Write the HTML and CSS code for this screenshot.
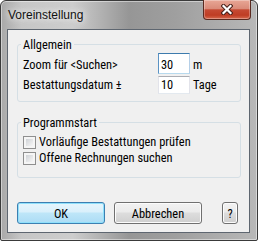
FILE: index.html
```html
<!DOCTYPE html>
<html>
<head>
    <title>Voreinstellung</title>
    <meta charset="utf-8">
    <link rel="stylesheet" href="styles.css">
</head>
<body>
    <div class="window">
        <div class="titlebar">
            <span class="title">Voreinstellung</span>
            <button class="close-button" title="Schließen">
                <svg width="12" height="11" viewBox="0 0 12 11">
                    <path d="M2.5 2 L9.5 9 M9.5 2 L2.5 9" stroke="#47211a" stroke-width="4.2" stroke-linecap="square"/>
                    <path d="M2.5 2 L9.5 9 M9.5 2 L2.5 9" stroke="#ffffff" stroke-width="2.2" stroke-linecap="square"/>
                </svg>
            </button>
        </div>

        <div class="client">
            <fieldset class="group group-general">
                <legend>Allgemein</legend>
                <div class="field-grid">
                    <label for="zoom" class="field-label">Zoom für &lt;Suchen&gt;</label>
                    <input type="text" id="zoom" class="edit focused" value="30">
                    <span class="unit">m</span>

                    <label for="days" class="field-label">Bestattungsdatum ±</label>
                    <input type="text" id="days" class="edit" value="10">
                    <span class="unit">Tage</span>
                </div>
            </fieldset>

            <fieldset class="group group-start">
                <legend>Programmstart</legend>
                <label class="check">
                    <input type="checkbox" class="check-box">
                    Vorläufige Bestattungen prüfen
                </label>
                <label class="check">
                    <input type="checkbox" class="check-box">
                    Offene Rechnungen suchen
                </label>
            </fieldset>

            <div class="buttons">
                <button class="btn btn-default">OK</button>
                <button class="btn btn-cancel">Abbrechen</button>
                <button class="btn btn-help">?</button>
            </div>
        </div>
    </div>
</body>
</html>
```

FILE: styles.css
```css
body {
    margin: 0;
    font-family: "Roboto Condensed", "Liberation Sans", Arial, sans-serif;
    font-size: 12.4px;
    color: #000;
}

.window {
    width: 258px;
    height: 241px;
    box-sizing: border-box;
    border: 1px solid #3a3a3a;
    border-radius: 6px 6px 2px 2px;
    background: linear-gradient(to right, #a8a8a8 0%, #c6c6c6 8%, #cdcdcd 28%, #969696 50%, #9f9f9f 68%, #b8b8b8 100%);
    box-shadow: inset 0 0 0 1px rgba(255, 255, 255, 0.45);
    display: flex;
    flex-direction: column;
}

.titlebar {
    height: 28px;
    display: flex;
    align-items: flex-start;
    padding: 0 6px 0 7px;
}

.title {
    font-family: "Liberation Sans", Arial, sans-serif;
    font-size: 12px;
    line-height: 15px;
    margin-top: 7px;
    color: #111;
    text-shadow: 0 0 6px rgba(255, 255, 255, 0.9), 0 0 10px rgba(255, 255, 255, 0.7);
}

.close-button {
    margin-left: auto;
    margin-top: -1px;
    width: 48px;
    height: 20px;
    padding: 0;
    border: 1px solid #5a2a20;
    border-top: none;
    border-radius: 0 0 4px 4px;
    background: linear-gradient(#e8a796 0%, #da8b79 45%, #c54a33 52%, #bf3d24 80%, #d66a4e 100%);
    box-shadow: inset 0 0 0 1px rgba(255, 255, 255, 0.3);
    display: flex;
    align-items: center;
    justify-content: center;
}

.client {
    flex: 1;
    margin: 0 7px 7px 6px;
    border: 1px solid #5e6670;
    background-color: #f0f0f0;
}

.group {
    margin: 0 8px 0 9px;
    border: 1px solid #d5dfe5;
    border-radius: 3px;
    padding: 1px 5px 7px 5px;
    min-width: 0;
}

.group legend {
    padding: 0 2px;
    margin-left: -2px;
    line-height: 15px;
}

.group-general {
    margin-top: 7px;
}

.group-start {
    margin-top: 13px;
    padding-top: 4px;
    padding-bottom: 11px;
}

.field-grid {
    display: grid;
    grid-template-columns: 135px 32px auto;
    grid-template-rows: 21px 18px;
    row-gap: 2px;
    align-items: end;
}

.field-label,
.unit {
    line-height: 15px;
    padding-bottom: 2px;
    white-space: nowrap;
}

.unit {
    padding-left: 3px;
}

.edit {
    width: 32px;
    height: 18px;
    box-sizing: border-box;
    margin: 0;
    padding: 0 2px 1px 2px;
    font: inherit;
    line-height: 15px;
    background: #fff;
    border: 1px solid #e2e3ea;
    border-top-color: #abadb3;
    border-bottom-color: #e3e9ef;
    outline: none;
}

.edit.focused {
    height: 21px;
    padding-top: 3px;
    border-color: #b5cfe7;
    border-top-color: #3d7bad;
    border-left-color: #5b93c4;
    border-bottom-color: #b7d9ed;
}

.check {
    display: flex;
    align-items: flex-start;
    height: 16px;
    line-height: 16px;
    white-space: nowrap;
}

.check-box {
    appearance: none;
    width: 13px;
    height: 13px;
    box-sizing: border-box;
    margin: 2px 3px 0 0;
    padding: 2px;
    border: 1px solid #8f8f8f;
    background: linear-gradient(135deg, #cfd2d6, #f6f6f6) content-box, #f5f5f5;
}

.buttons {
    display: flex;
    margin: 24px 0 0 9px;
}

.btn {
    width: 88px;
    height: 22px;
    box-sizing: border-box;
    padding: 0;
    font: inherit;
    color: #000;
    border: 1px solid #707070;
    border-radius: 3px;
    background: linear-gradient(#f2f2f2 0%, #ebebeb 45%, #dddddd 50%, #cfcfcf 100%);
    box-shadow: inset 0 0 0 1px #fcfcfc;
}

.btn-default {
    border-color: #3c7fb1;
    background: linear-gradient(#e6f5fc 0%, #d9f0fb 45%, #bee6f8 50%, #acdcf5 100%);
    box-shadow: inset 0 0 0 1px #8fe0fb;
}

.btn-cancel {
    margin-left: 9px;
}

.btn-help {
    width: 16px;
    margin-left: 20px;
}
```
